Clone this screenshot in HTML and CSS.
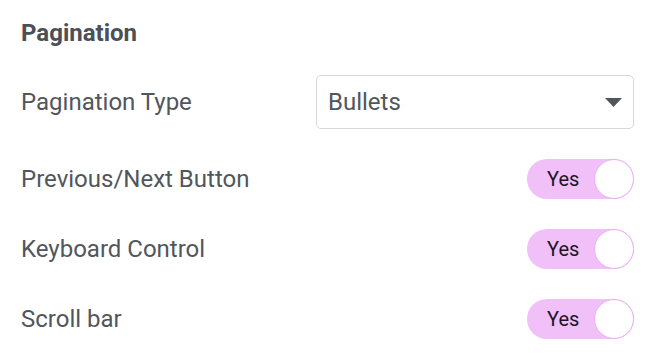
FILE: index.html
```html
<!DOCTYPE html>
<html lang="en">
<head>
<meta charset="utf-8">
<title>Pagination</title>
<link rel="stylesheet" href="styles.css">
</head>
<body>
<div class="panel">
  <h2 class="section-title">Pagination</h2>
  <div class="controls">
    <div class="row">
      <span class="label">Pagination Type</span>
      <div class="select">
        <span class="select-value">Bullets</span>
        <svg class="caret" width="17" height="9" viewBox="0 0 17 9"><path d="M0 0H17L8.5 9Z" fill="#51565d"/></svg>
      </div>
    </div>
    <div class="row">
      <span class="label">Previous/Next Button</span>
      <div class="switch"><span class="switch-text">Yes</span><span class="knob"></span></div>
    </div>
    <div class="row">
      <span class="label">Keyboard Control</span>
      <div class="switch"><span class="switch-text">Yes</span><span class="knob"></span></div>
    </div>
    <div class="row">
      <span class="label">Scroll bar</span>
      <div class="switch"><span class="switch-text">Yes</span><span class="knob"></span></div>
    </div>
  </div>
</div>
</body>
</html>
```

FILE: styles.css
```css
html, body {
  margin: 0;
  padding: 0;
  background: #ffffff;
}
body {
  font-family: Roboto, "Liberation Sans", sans-serif;
  color: #51565d;
}
.panel {
  padding: 18px 22px 0 21px;
}
.section-title {
  margin: 0;
  font-size: 24px;
  line-height: 30px;
  font-weight: 700;
  color: #4b5057;
}
.controls {
  margin-top: 27px;
  display: flex;
  flex-direction: column;
  gap: 30px;
}
.row {
  display: flex;
  align-items: center;
  justify-content: space-between;
}
.label {
  font-size: 24px;
  line-height: 28px;
  color: #51565d;
}
.select {
  box-sizing: border-box;
  width: 318px;
  height: 54px;
  border: 1px solid #d5d8dc;
  border-radius: 5px;
  display: flex;
  align-items: center;
  justify-content: space-between;
  padding: 0 11px 0 11px;
}
.select-value {
  font-size: 24px;
  line-height: 28px;
  color: #51565d;
}
.caret {
  display: block;
}
.switch {
  box-sizing: border-box;
  width: 107px;
  height: 40px;
  border-radius: 20px;
  background: #f1c0f8;
  display: flex;
  align-items: center;
  justify-content: space-between;
  padding-left: 20px;
}
.switch-text {
  font-size: 20px;
  line-height: 24px;
  color: #1c1527;
}
.knob {
  box-sizing: border-box;
  width: 40px;
  height: 40px;
  border-radius: 50%;
  background: #ffffff;
  border: 1.5px solid #ebaef3;
}
```
